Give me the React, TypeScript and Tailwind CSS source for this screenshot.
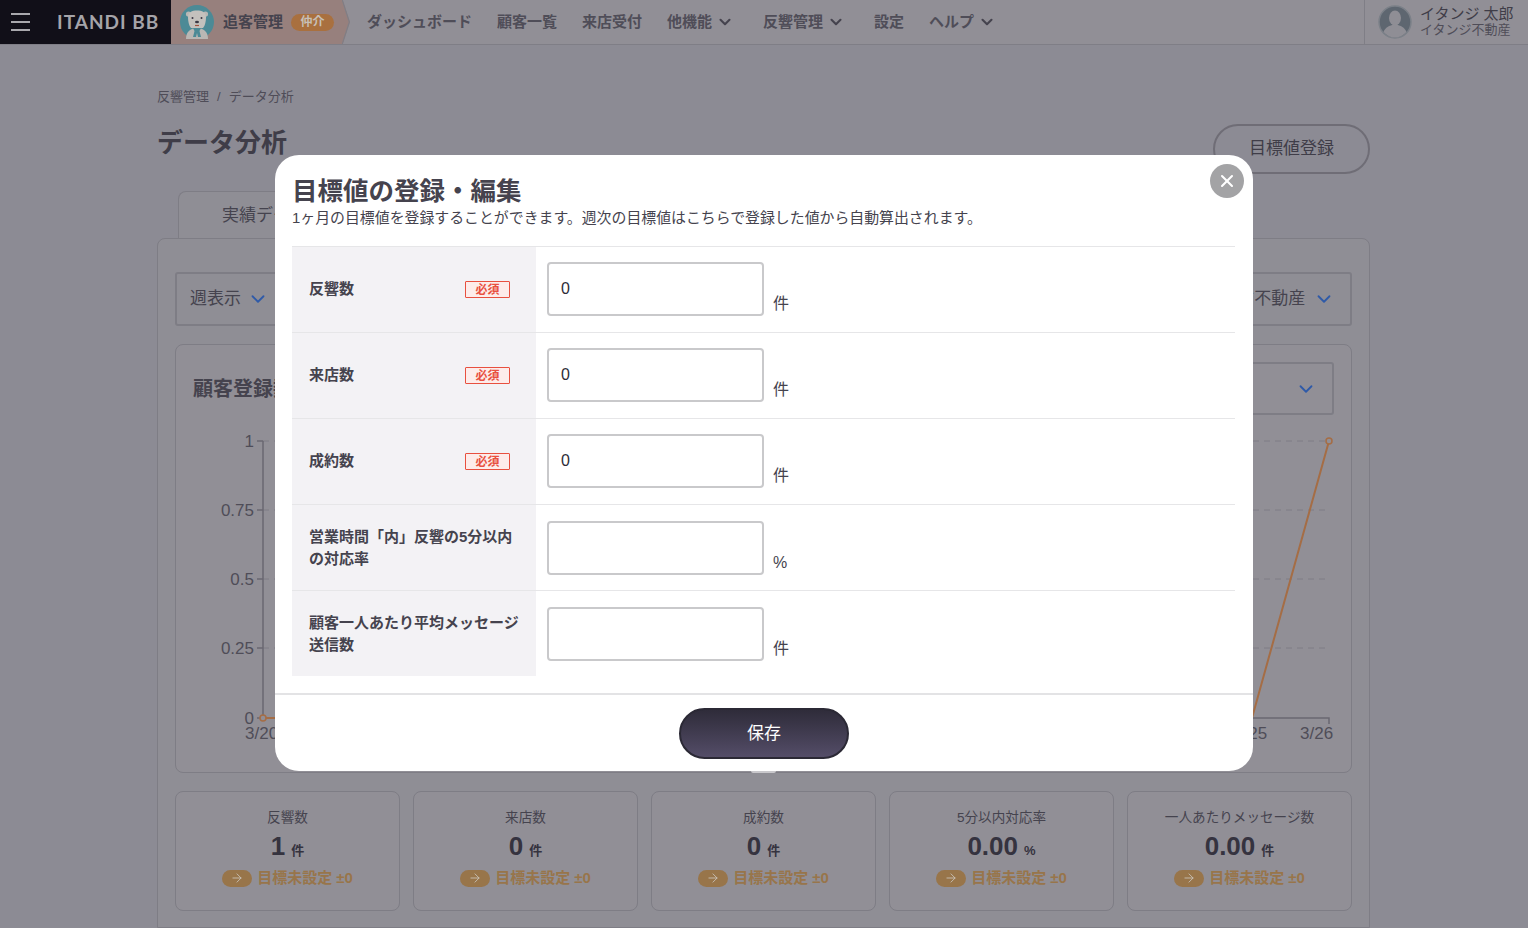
import { ChevronDown, X, ArrowRight } from "lucide-react";

const FONT = "font-['Liberation_Sans','Noto_Sans_CJK_JP',sans-serif]";

const navItems = [
  { label: "ダッシュボード" },
  { label: "顧客一覧" },
  { label: "来店受付" },
  { label: "他機能", menu: true },
  { label: "反響管理", menu: true },
  { label: "設定" },
  { label: "ヘルプ", menu: true },
];

const kpis = [
  { label: "反響数", value: "1", unit: "件" },
  { label: "来店数", value: "0", unit: "件" },
  { label: "成約数", value: "0", unit: "件" },
  { label: "5分以内対応率", value: "0.00", unit: "%" },
  { label: "一人あたりメッセージ数", value: "0.00", unit: "件" },
];

const goalRows = [
  { label: "反響数", required: true, value: "0", unit: "件" },
  { label: "来店数", required: true, value: "0", unit: "件" },
  { label: "成約数", required: true, value: "0", unit: "件" },
  { label: "営業時間「内」反響の5分以内の対応率", required: false, value: "", unit: "%" },
  { label: "顧客一人あたり平均メッセージ送信数", required: false, value: "", unit: "件" },
];

const yTicks = [
  { label: "1", y: 441 },
  { label: "0.75", y: 510 },
  { label: "0.5", y: 579 },
  { label: "0.25", y: 648 },
  { label: "0", y: 718 },
];

function BearAvatar() {
  return (
    <svg viewBox="0 0 34 34" className="h-[34px] w-[34px] shrink-0">
      <circle cx="17" cy="17" r="17" fill="#4c8a96" />
      <circle cx="8.5" cy="9" r="2.6" fill="#b9b7b4" />
      <circle cx="25.5" cy="9" r="2.6" fill="#b9b7b4" />
      <path d="M8 12c0-5 4-6.500 9-6.500S26 7 26 12c0 4-1 9-3 11H11c-2-2-3-7-3-11z" fill="#c4c1bd" />
      <path d="M6 34c0-7 4-11 11-11s11 4 11 11z" fill="#b9b7b4" />
      <path d="M13 23h8l-1.500 3 1.500 6h-3l-1-4-1 4h-3l1.500-6z" fill="#4c8a96" />
      <circle cx="12.500" cy="13" r="1" fill="#3a3844" />
      <circle cx="21.500" cy="13" r="1" fill="#3a3844" />
      <ellipse cx="17" cy="17" rx="2" ry="1.300" fill="#3a3844" />
      <path d="M15 20.500h4" stroke="#a0523f" strokeWidth="1.200" />
    </svg>
  );
}

function UserAvatar() {
  return (
    <svg viewBox="0 0 34 34" className="h-[34px] w-[34px] shrink-0">
      <circle cx="17" cy="17" r="16" fill="#5e6670" stroke="#7b8088" strokeWidth="1.500" />
      <ellipse cx="17" cy="13" rx="6" ry="7.500" fill="#8f8e95" />
      <path d="M5.500 27c2-5 6-6 8.500-7h6c2.500 1 6.500 2 8.500 7-3 3.500-7 5.500-11.500 5.500S8.500 30.500 5.500 27z" fill="#8f8e95" />
    </svg>
  );
}

function Header() {
  return (
    <header className="flex h-[45px] items-stretch border-b border-[#7f7e86] bg-[#918f96]">
      <div className="flex w-[171px] shrink-0 items-center bg-[#110f18] pl-[11px]">
        <div className="flex w-[19px] flex-col gap-[6px]">
          <span className="h-[2px] bg-[#a9a8ad]" />
          <span className="h-[2px] bg-[#a9a8ad]" />
          <span className="h-[2px] bg-[#a9a8ad]" />
        </div>
        <span className="ml-[27px] font-['Lato',sans-serif] text-[19px] font-bold tracking-[1px] whitespace-nowrap text-[#a5a4a9]">
          ITANDI BB
        </span>
      </div>
      <div className="relative flex w-[179px] shrink-0 items-center bg-[#97807d] pl-[9px] [clip-path:polygon(0_0,96%_0,100%_50%,96%_100%,0_100%)]">
        <BearAvatar />
        <span className="ml-[9px] text-[15px] font-bold text-[#45434e]">追客管理</span>
        <span className="ml-[8px] flex h-[17px] w-[43px] items-center justify-center rounded-full bg-[#a9703f] text-[12px] font-bold text-[#c7c0b8]">
          仲介
        </span>
        <svg viewBox="0 0 8 44" preserveAspectRatio="none" className="absolute top-0 right-0 h-full w-[8px]">
          <path d="M0.5 0L7.500 22L0.500 44" fill="none" stroke="#7f7e86" strokeWidth="1.500" />
        </svg>
      </div>
      <nav className="ml-[17px] flex items-center gap-[25px]">
        {navItems.map((item) => (
          <span key={item.label} className="flex items-center text-[15px] font-bold text-[#4f4d58]">
            {item.label}
            {item.menu && (
              <ChevronDown className="mr-[4px] ml-[4px] h-[18px] w-[18px] text-[#45434e]" strokeWidth={2.800} />
            )}
          </span>
        ))}
      </nav>
      <div className="ml-auto flex w-[164px] items-center gap-[8px] border-l border-[#7f7e86] pl-[13px]">
        <UserAvatar />
        <div className="flex flex-col leading-[16px] whitespace-nowrap">
          <span className="text-[15px] text-[#3f3d48]">イタンジ 太郎</span>
          <span className="text-[13px] text-[#4f4d58]">イタンジ不動産</span>
        </div>
      </div>
    </header>
  );
}

function SelectBox({ label, className }: { label: string; className: string }) {
  return (
    <div className={`flex items-center rounded-[3px] border-2 border-[#7e7d85] pr-[15px] pl-[13px] text-[17px] text-[#45434e] ${className}`}>
      <span className="whitespace-nowrap">{label}</span>
      <ChevronDown className="ml-auto h-[22px] w-[22px] text-[#2f5aa8]" strokeWidth={2} />
    </div>
  );
}

function Chart() {
  return (
    <svg viewBox="176 430 1175 320" className="mt-[15px] block w-full font-['Liberation_Sans',sans-serif]">
      {yTicks.slice(0, 4).map((t) => (
        <line key={t.y} x1="263" x2="1329" y1={t.y} y2={t.y} stroke="#7e7d85" strokeDasharray="6 5" />
      ))}
      <path d="M263 441v277h1066v6M257 441h6M257 510h6M257 579h6M257 648h6M257 718h6" fill="none" stroke="#6a6871" strokeWidth="1.500" />
      {yTicks.map((t) => (
        <text key={t.label} x="254" y={t.y + 6} textAnchor="end" fontSize="17" fill="#4f4d58">
          {t.label}
        </text>
      ))}
      <text x="245" y="739" fontSize="17" fill="#4f4d58">3/20</text>
      <text x="1234" y="739" fontSize="17" fill="#4f4d58">3/25</text>
      <text x="1300" y="739" fontSize="17" fill="#4f4d58">3/26</text>
      <path d="M263 718h30M1252 718L1329 441" fill="none" stroke="#a56d45" strokeWidth="2" />
      <circle cx="263" cy="718" r="3" fill="#918f96" stroke="#a56d45" strokeWidth="1.500" />
      <circle cx="1329" cy="441" r="3" fill="#918f96" stroke="#a56d45" strokeWidth="1.500" />
    </svg>
  );
}

function KpiCard({ label, value, unit }: { label: string; value: string; unit: string }) {
  return (
    <div className="flex h-[120px] flex-col items-center rounded-[8px] border border-[#7e7d85] bg-[#918f96] pt-[18px]">
      <span className="text-[13.600px] leading-[16px] text-[#45434e]">{label}</span>
      <div className="mt-[1px] flex h-[30px] items-baseline gap-[6px] text-[#35333f]">
        <span className="text-[26px] font-bold">{value}</span>
        <span className="text-[13px] font-bold">{unit}</span>
      </div>
      <div className="mt-[10px] flex items-center gap-[5px] text-[15px] font-bold text-[#98754a]">
        <span className="flex h-[17px] w-[30px] items-center justify-center rounded-full bg-[#98754a]">
          <ArrowRight className="h-[14px] w-[14px] text-[#c9c2b8]" strokeWidth={1.500} />
        </span>
        目標未設定 ±0
      </div>
    </div>
  );
}

function GoalRow({ label, required, value, unit }: (typeof goalRows)[number]) {
  return (
    <div className="flex h-[86px] border-t border-[#e6e6e8]">
      <div className="flex w-[244px] shrink-0 items-center justify-between bg-[#f3f2f5] pr-[15px] pl-[17px]">
        <span className={required ? "mb-[2px] text-[15px] leading-[21.500px] font-bold text-[#45434e]" : "text-[15px] leading-[21.500px] font-bold text-[#45434e]"}>
          {label}
        </span>
        {required && (
          <span className="mr-[11px] flex h-[17px] w-[45px] shrink-0 items-center justify-center rounded-[1px] border border-[#e8503f] bg-[#fdecea] text-[12px] font-bold text-[#e8503f]">
            必須
          </span>
        )}
      </div>
      <div className={required ? "flex items-end gap-[9px] pb-[16px] pl-[11px]" : "flex items-end gap-[9px] pb-[15px] pl-[11px]"}>
        <input
          defaultValue={value}
          className="h-[54px] w-[217px] rounded-[4px] border-2 border-[#c9c9cb] px-[12px] text-[16px] text-[#2e2c38] outline-none"
        />
        <span className="text-[16px] leading-[24px] text-[#45434e]">{unit}</span>
      </div>
    </div>
  );
}

function GoalModal() {
  return (
    <div className="fixed inset-0 flex items-center justify-center pb-[2px]">
      <div className="relative h-[616px] w-[978px] rounded-[24px] bg-white">
        <button className="absolute top-[9px] right-[9px] flex h-[34px] w-[34px] items-center justify-center rounded-full bg-[#a3a3a5] text-white">
          <X className="h-[20px] w-[20px]" strokeWidth={2.500} />
        </button>
        <div className="pt-[19px] pr-[18px] pl-[17px]">
          <h2 className="text-[25.500px] leading-[35px] font-bold text-[#45434e]">目標値の登録・編集</h2>
          <p className="text-[14.900px] leading-[18px] text-[#45434e]">
            1ヶ月の目標値を登録することができます。週次の目標値はこちらで登録した値から自動算出されます。
          </p>
          <div className="mt-[19px]">
            {goalRows.map((row) => (
              <GoalRow key={row.label} {...row} />
            ))}
          </div>
        </div>
        <div className="mt-[17px] flex justify-center border-t-2 border-[#e3e3e5] pt-[13px]">
          <button className="h-[51px] w-[170px] rounded-full border-2 border-[#2b2935] bg-gradient-to-b from-[#2f2c3a] to-[#544d68] text-[17px] text-white">
            保存
          </button>
        </div>
        <div className="absolute -bottom-[2px] left-[476px] h-[2px] w-[25px] rounded-b-[2px] bg-[#c9c8cc]" />
      </div>
    </div>
  );
}

export default function App() {
  return (
    <div className={`relative h-[928px] overflow-hidden bg-[#8c8b94] ${FONT}`}>
      <Header />
      <main className="ml-[157px] w-[1213px]">
        <p className="mt-[44px] flex text-[13px] leading-[16px] text-[#4f4d58]">
          反響管理<span className="mx-[8px]">/</span>データ分析
        </p>
        <div className="mt-[19px] flex h-[50px] items-center justify-between">
          <h1 className="mb-[12px] text-[26px] font-bold text-[#3f3d48]">データ分析</h1>
          <button className="h-[50px] w-[157px] rounded-full border-2 border-[#6f6d76] text-[17px] text-[#3f3d48]">
            目標値登録
          </button>
        </div>
        <div className="mt-[17px] ml-[21px] flex h-[48px] w-[200px] items-center rounded-t-[8px] border border-b-0 border-[#7e7d85] bg-[#8f8e95] pl-[43px] text-[17px] text-[#45434e]">
          実績データ
        </div>
        <section className="-mt-px rounded-t-[8px] border border-[#7e7d85] bg-[#8f8e95] px-[17px] pt-[33px]">
          <div className="flex justify-between">
            <SelectBox label="週表示" className="h-[54px] w-[111px]" />
            <SelectBox label="イタンジ不動産" className="h-[54px] w-[180px]" />
          </div>
          <div className="mt-[18px] h-[429px] rounded-[8px] border border-[#7e7d85] bg-[#918f96]">
            <div className="flex items-center justify-between pt-[17px] pr-[17px] pl-[17px]">
              <span className="text-[20px] font-bold text-[#45434e]">顧客登録数</span>
              <SelectBox label="全体" className="h-[53px] w-[200px]" />
            </div>
            <Chart />
          </div>
          <div className="mt-[18px] grid grid-cols-5 gap-[13px] pb-[16px]">
            {kpis.map((kpi) => (
              <KpiCard key={kpi.label} {...kpi} />
            ))}
          </div>
        </section>
      </main>
      <GoalModal />
    </div>
  );
}
